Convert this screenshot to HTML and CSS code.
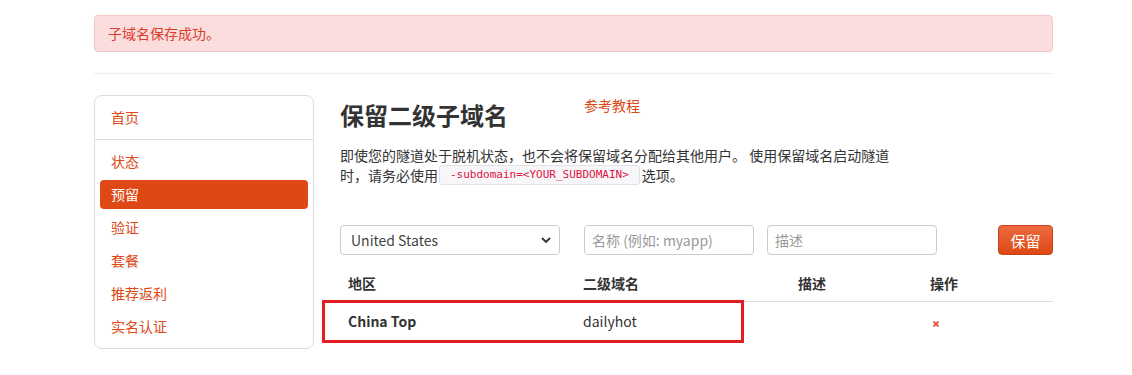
FILE: index.html
```html
<!DOCTYPE html>
<html lang="zh-CN">
<head>
    <meta charset="UTF-8">
    <meta name="viewport" content="width=device-width, initial-scale=1.0">
    <title>保留二级子域名</title>
    <link rel="stylesheet" href="styles.css">
</head>
<body>

<div class="container">
    <div class="alert">子域名保存成功。</div>
    <hr class="rule">

    <div class="layout">
        <div class="side">
            <div class="side-top">
                <a class="side-link" href="#">首页</a>
            </div>
            <div class="side-list">
                <a class="side-link" href="#">状态</a>
                <a class="side-link active" href="#">预留</a>
                <a class="side-link" href="#">验证</a>
                <a class="side-link" href="#">套餐</a>
                <a class="side-link" href="#">推荐返利</a>
                <a class="side-link" href="#">实名认证</a>
            </div>
        </div>

        <div class="main">
            <div class="title-row">
                <h2 class="title">保留二级子域名</h2>
                <a class="doc-link" href="#">参考教程</a>
            </div>
            <p class="intro">即使您的隧道处于脱机状态，也不会将保留域名分配给其他用户。 使用保留域名启动隧道时，请务必使用<code class="code">-subdomain=&lt;YOUR_SUBDOMAIN&gt;</code>选项。</p>

            <form class="reserve" onsubmit="return false">
                <div class="select-wrap">
                    <select class="field select">
                        <option>United States</option>
                        <option>China Top</option>
                    </select>
                    <svg class="caret" width="10" height="6" viewBox="0 0 10 6"><path d="M1 1l4 4 4-4" fill="none" stroke="#333" stroke-width="1.8"/></svg>
                </div>
                <input class="field name" type="text" placeholder="名称 (例如: myapp)">
                <input class="field desc" type="text" placeholder="描述">
                <button class="btn" type="submit">保留</button>
            </form>

            <div class="table-wrap">
                <table class="list">
                    <thead>
                        <tr>
                            <th class="c1">地区</th>
                            <th class="c2">二级域名</th>
                            <th class="c3">描述</th>
                            <th class="c4">操作</th>
                        </tr>
                    </thead>
                    <tbody>
                        <tr>
                            <td><strong>China Top</strong></td>
                            <td>dailyhot</td>
                            <td></td>
                            <td><a class="del" href="#"><svg width="6" height="6" viewBox="0 0 6 6"><path d="M0.5 0.5l5 5M5.5 0.5l-5 5" stroke="#e4402a" stroke-width="1.6"/></svg></a></td>
                        </tr>
                    </tbody>
                </table>
                <div class="mark"></div>
            </div>
        </div>
    </div>
</div>

</body>
</html>
```

FILE: styles.css
```css
body {
    margin: 0;
    padding: 0;
    font-family: "Noto Sans CJK SC", "Noto Sans", sans-serif;
    font-size: 14px;
    line-height: 20px;
    color: #333;
    background: #fff;
}

a {
    color: #dd4814;
    text-decoration: none;
}

.container {
    width: 959px;
    margin-left: 94px;
    padding-top: 15px;
}

.alert {
    height: 35px;
    line-height: 35px;
    padding: 0 13px;
    background-color: #fadddc;
    border: 1px solid #f6c6c4;
    border-radius: 4px;
    color: #dc3b2a;
}

.rule {
    margin: 21px 0 21px;
    border: 0;
    border-top: 1px solid #eee;
}

.layout {
    display: flex;
    align-items: flex-start;
    gap: 26px;
}

/* sidebar */
.side {
    width: 218px;
    border: 1px solid #ddd;
    border-radius: 8px;
}

.side-top {
    padding: 7px 5px;
    border-bottom: 1px solid #ddd;
}

.side-list {
    display: flex;
    flex-direction: column;
    gap: 4px;
    padding: 7px 5px 7px;
}

.side-link {
    display: block;
    height: 29px;
    line-height: 29px;
    padding-left: 11px;
    border-radius: 4px;
}

.side-link.active {
    background-color: #dd4814;
    color: #fff;
}

/* main */
.main {
    width: 713px;
}

.title-row {
    display: flex;
    align-items: flex-start;
}

.title {
    width: 244px;
    margin: 5px 0 0;
    font-size: 24px;
    line-height: 30px;
    font-weight: bold;
    color: #333;
}

.doc-link {
    line-height: 20px;
}

.intro {
    max-width: 556px;
    margin: 15px 0 0;
}

.code {
    display: inline-block;
    box-sizing: border-box;
    height: 20px;
    line-height: 18px;
    padding: 0 10px;
    margin: 0 2px 0 1px;
    vertical-align: top;
    font-family: "DejaVu Sans Mono", monospace;
    font-size: 11px;
    color: #dd1144;
    background-color: #f7f7f9;
    border: 1px solid #e1e1e8;
    border-radius: 3px;
}

.reserve {
    display: flex;
    margin-top: 40px;
}

.field {
    box-sizing: border-box;
    height: 30px;
    padding: 0 7px;
    font-family: inherit;
    font-size: 14px;
    color: #555;
    background: #fff;
    border: 1px solid #ccc;
    border-radius: 4px;
}

.field::placeholder {
    color: #999;
}

.select-wrap {
    position: relative;
    width: 220px;
}

.select {
    width: 220px;
    padding-left: 10px;
    appearance: none;
    color: #444;
}

.caret {
    position: absolute;
    right: 9px;
    top: 12px;
    pointer-events: none;
}

.name {
    width: 170px;
    margin-left: 24px;
}

.desc {
    width: 170px;
    margin-left: 13px;
}

.btn {
    height: 30px;
    width: 55px;
    margin-left: auto;
    padding: 0;
    font-family: inherit;
    font-size: 15px;
    color: #fff;
    background: linear-gradient(#ec6a40, #dd4814);
    border: 1px solid #c9421a;
    border-radius: 4px;
}

/* table */
.table-wrap {
    position: relative;
    margin-top: 10px;
}

.list {
    width: 100%;
    border-collapse: collapse;
}

.list th {
    text-align: left;
    padding: 8px 8px;
    font-weight: bold;
    border-bottom: 1px solid #ddd;
}

.list td {
    padding: 9px 8px 10px;
    height: 20px;
}

.c1 { width: 219px; }
.c2 { width: 199px; }
.c3 { width: 116px; }

.del {
    display: inline-block;
    margin-left: 3px;
}

.mark {
    position: absolute;
    left: -18px;
    top: 35px;
    width: 416px;
    height: 37px;
    border: 3px solid #e31d23;
}
```
